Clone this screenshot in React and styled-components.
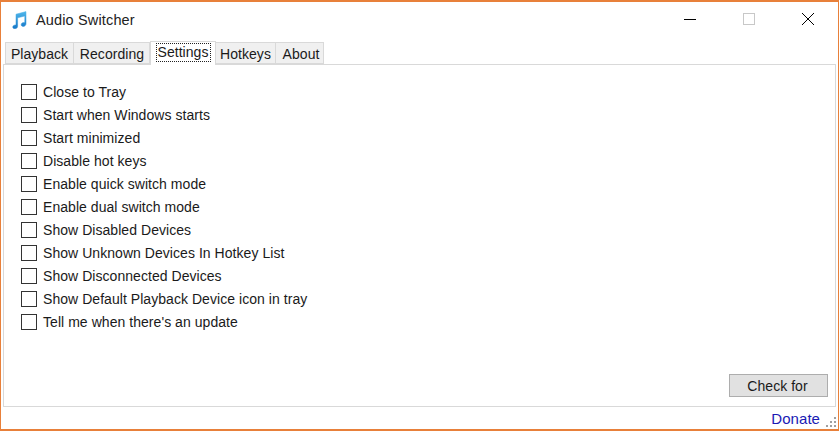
import React from 'react';
import styled, { createGlobalStyle } from 'styled-components';

const GlobalStyle = createGlobalStyle`
  html, body {
    margin: 0;
    padding: 0;
    background: #fff;
  }
  body {
    font-family: "Liberation Sans", Arial, sans-serif;
    font-size: 14px;
    letter-spacing: 0.05px;
    color: #1a1a1a;
  }
`;

const Window = styled.div`
  box-sizing: border-box;
  width: 839px;
  height: 431px;
  display: flex;
  flex-direction: column;
  background: #fff;
  border: 1px solid #e8803a;
  border-top-width: 2px;
  border-bottom-width: 2px;
  overflow: hidden;
`;

const TitleBar = styled.div`
  display: flex;
  align-items: center;
  height: 38px;
  flex-shrink: 0;
  padding: 0 0 3px 10px;
  box-sizing: border-box;
`;

const AppTitle = styled.span`
  margin-left: 9px;
  font-size: 14.500px;
  letter-spacing: 0.15px;
  color: #222;
`;

const WindowControls = styled.div`
  margin-left: auto;
  margin-bottom: 1px;
  display: flex;
  align-items: center;
  margin-right: 23px;
  gap: 45px;
`;

const ControlIcon = styled.svg`
  display: block;
  width: 14px;
  height: 14px;
`;

const TabStrip = styled.div`
  display: flex;
  align-items: flex-end;
  height: 24px;
  flex-shrink: 0;
  padding-left: 4px;
`;

const Tab = styled.div`
  box-sizing: border-box;
  width: ${(p) => p.$width}px;
  height: ${(p) => (p.$active ? 24 : 22)}px;
  margin-bottom: ${(p) => (p.$active ? -1 : 0)}px;
  display: flex;
  align-items: ${(p) => (p.$active ? 'flex-start' : 'center')};
  padding-top: ${(p) => (p.$active ? 2 : 2)}px;
  padding-left: ${(p) => p.$shift || 0}px;
  justify-content: center;
  background: ${(p) => (p.$active ? '#fff' : '#f0f0f0')};
  border: 1px solid #d9d9d9;
  border-bottom: ${(p) => (p.$active ? 'none' : '1px solid #d9d9d9')};
  border-left: ${(p) => (p.$active || p.$first ? '1px solid #d9d9d9' : 'none')};
  position: relative;
  z-index: ${(p) => (p.$active ? 1 : 0)};
`;

const TabLabel = styled.span`
  padding: 0 1px;
  line-height: 17px;
  outline: ${(p) => (p.$active ? '1px dotted #222' : 'none')};
  outline-offset: 0;
`;

const Panel = styled.div`
  flex: 1;
  margin: 0 2px 0 2px;
  border: 1px solid #d9d9d9;
  display: flex;
  flex-direction: column;
  padding: 19px 7px 9px 17px;
  min-height: 0;
`;

const OptionList = styled.div`
  display: flex;
  flex-direction: column;
  gap: 7px;
`;

const Option = styled.label`
  display: flex;
  align-items: center;
  gap: 6px;
  height: 16px;
`;

const CheckBox = styled.span`
  box-sizing: border-box;
  width: 16px;
  height: 16px;
  flex-shrink: 0;
  background: #fff;
  border: 1px solid #333;
`;

const ButtonRow = styled.div`
  margin-top: auto;
  display: flex;
  justify-content: flex-end;
`;

const Button = styled.button`
  box-sizing: border-box;
  width: 99px;
  height: 23px;
  padding: 0 2px 0 0;
  background: #e1e1e1;
  border: 1px solid #adadad;
  font: inherit;
  letter-spacing: inherit;
  color: #1a1a1a;
`;

const Footer = styled.div`
  height: 22px;
  flex-shrink: 0;
  display: flex;
  align-items: center;
  justify-content: flex-end;
  position: relative;
  padding: 1px 18px 0 0;
  box-sizing: border-box;
`;

const DonateLink = styled.a`
  color: #1a1ab4;
  font-size: 15px;
`;

const Grip = styled.svg`
  position: absolute;
  right: 2px;
  bottom: 2px;
  width: 11px;
  height: 11px;
`;

const options = [
  'Close to Tray',
  'Start when Windows starts',
  'Start minimized',
  'Disable hot keys',
  'Enable quick switch mode',
  'Enable dual switch mode',
  'Show Disabled Devices',
  'Show Unknown Devices In Hotkey List',
  'Show Disconnected Devices',
  'Show Default Playback Device icon in tray',
  "Tell me when there's an update",
];

const tabs = [
  { label: 'Playback', width: 69 },
  { label: 'Recording', width: 76, shift: 1 },
  { label: 'Settings', width: 66, active: true },
  { label: 'Hotkeys', width: 60 },
  { label: 'About', width: 48, shift: 3 },
];

const gripDots = [[9, 1], [5, 5], [9, 5], [1, 9], [5, 9], [9, 9]];

function NoteIcon() {
  return (
    <svg width="16" height="18" viewBox="0 0 16 18">
      <defs>
        <linearGradient id="note" x1="0" y1="0" x2="0" y2="1">
          <stop offset="0" stopColor="#4fb6ea" />
          <stop offset="1" stopColor="#1477c8" />
        </linearGradient>
      </defs>
      <path
        fill="url(#note)"
        stroke="url(#note)"
        strokeWidth="0.5"
        d="M5 3.2 15 .6v12.2c0 1.5-1.3 2.6-2.8 2.6-1.2 0-2-.7-2-1.7 0-1.2 1.2-2.1 2.6-2.1.4 0 .7 0 1 .1V5L6.6 6.8v8.5c0 1.500-1.300 2.500-2.800 2.500-1.200 0-2-.7-2-1.700 0-1.200 1.200-2.100 2.600-2.100.2 0 .4 0 .6.100z"
      />
    </svg>
  );
}

//Main settings window
function App() {
  return (
    <Window>
      <GlobalStyle />
      <TitleBar>
        <NoteIcon />
        <AppTitle>Audio Switcher</AppTitle>
        <WindowControls>
          <ControlIcon viewBox="0 0 14 14">
            <path d="M1 7.500h12" stroke="#000" fill="none" />
          </ControlIcon>
          <ControlIcon viewBox="0 0 14 14">
            <rect x="1.500" y="1.500" width="11" height="11" stroke="#c8c8c8" fill="none" />
          </ControlIcon>
          <ControlIcon viewBox="0 0 14 14">
            <path d="M1 1l12 12M13 1L1 13" stroke="#000" fill="none" />
          </ControlIcon>
        </WindowControls>
      </TitleBar>
      <TabStrip>
        {tabs.map((tab, i) => (
          <Tab key={tab.label} $width={tab.width} $active={tab.active} $first={i === 0} $shift={tab.shift}>
            <TabLabel $active={tab.active}>{tab.label}</TabLabel>
          </Tab>
        ))}
      </TabStrip>
      <Panel>
        <OptionList>
          {options.map((option) => (
            <Option key={option}>
              <CheckBox />
              {option}
            </Option>
          ))}
        </OptionList>
        <ButtonRow>
          <Button>Check for</Button>
        </ButtonRow>
      </Panel>
      <Footer>
        <DonateLink>Donate</DonateLink>
        <Grip viewBox="0 0 11 11">
          {gripDots.map(([x, y]) => (
            <rect key={`${x}-${y}`} x={x} y={y} width="2" height="2" fill="#a0a0a0" />
          ))}
        </Grip>
      </Footer>
    </Window>
  );
}

export default App;
